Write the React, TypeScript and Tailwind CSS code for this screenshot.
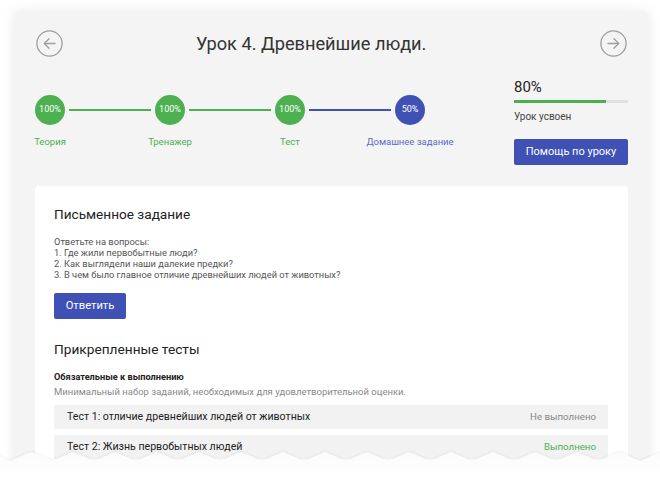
import React from 'react';

type Step = { label: string; value: string; done: boolean };

const steps: Step[] = [
  { label: 'Теория', value: '100%', done: true },
  { label: 'Тренажер', value: '100%', done: true },
  { label: 'Тест', value: '100%', done: true },
  { label: 'Домашнее задание', value: '50%', done: false },
];

const ArrowCircle: React.FC<{ dir: 'left' | 'right' }> = ({ dir }) => (
  <svg width="27" height="27" viewBox="0 0 27 27" fill="none" stroke="#9e9e9e" strokeWidth="1.3" strokeLinecap="round" strokeLinejoin="round">
    <circle cx="13.5" cy="13.5" r="12.6" />
    {dir === 'left' ? (
      <>
        <path d="M19 13.5H8.5" />
        <path d="M13 8.8L8.3 13.5L13 18.2" />
      </>
    ) : (
      <>
        <path d="M8 13.5H18.5" />
        <path d="M14 8.8L18.7 13.5L14 18.2" />
      </>
    )}
  </svg>
);

const App: React.FC = () => {
  // zigzag torn edge along the bottom
  const pts: string[] = ['0,30'];
  for (let x = -11; x <= 680; x += 21) {
    const i = Math.round((x + 11) / 21);
    pts.push(`${x},${i % 2 === 0 ? 4 : 13}`);
  }
  pts.push('680,30');

  return (
    <div className="relative w-[660px] h-[478px] overflow-hidden bg-white font-['Roboto',sans-serif]">
      <div className="pt-[11px] px-[15px]">
        <div className="w-[633px] h-[520px] bg-[#f4f4f4] rounded-[5px] shadow-[0_1px_14px_rgba(0,0,0,0.10)]">
          {/* Header */}
          <div className="flex items-center px-[21px] pt-[19px]">
            <ArrowCircle dir="left" />
            <h1 className="ml-[133px] text-[18.2px] leading-[26px] text-[#333]">Урок 4. Древнейшие люди.</h1>
            <div className="flex-1" />
            <ArrowCircle dir="right" />
          </div>

          {/* Steps + progress */}
          <div className="flex justify-between mt-[21px] pl-[20px] pr-[20px]">
            <div className="flex items-start pt-[17px]">
              {steps.map((s, i) => (
                <React.Fragment key={s.label}>
                  {i > 0 && (
                    <div
                      className={`mt-[14px] mx-[4px] w-[82px] h-[2px] ${s.done ? 'bg-[#4caf50]' : 'bg-[#3f51b5]'}`}
                    />
                  )}
                  <div className="flex flex-col items-center w-[30px]">
                    <div
                      className={`w-[30px] h-[30px] rounded-full flex items-center justify-center text-white text-[9px] ${s.done ? 'bg-[#4caf50]' : 'bg-[#3f51b5]'}`}
                    >
                      {s.value}
                    </div>
                    <div
                      className={`mt-[11px] whitespace-nowrap text-[9.5px] leading-[12px] ${s.done ? 'text-[#4caf50]' : 'text-[#5c6bc0]'}`}
                    >
                      {s.label}
                    </div>
                  </div>
                </React.Fragment>
              ))}
            </div>

            <div className="w-[114px]">
              <div className="text-[15px] leading-[18px] text-[#222]">80%</div>
              <div className="mt-[4px] h-[3px] w-full bg-[#e0e0e0]">
                <div className="h-full bg-[#4caf50]" style={{ width: '81%' }} />
              </div>
              <div className="mt-[8px] text-[10px] leading-[12px] text-[#444]">Урок усвоен</div>
              <button className="mt-[16px] w-full h-[26px] rounded-[2px] bg-[#3f51b5] text-white text-[11px]">
                Помощь по уроку
              </button>
            </div>
          </div>

          {/* White content card */}
          <div className="mt-[21px] mx-[20px] bg-white rounded-[4px] pl-[19px] pr-[20px] pt-[19px] pb-[40px]">
            <h2 className="text-[13.6px] leading-[18px] text-[#222]">Письменное задание</h2>
            <div className="mt-[13px] text-[9.3px] leading-[11px] text-[#555]">
              <div>Ответьте на вопросы:</div>
              <div>1. Где жили первобытные люди?</div>
              <div>2. Как выглядели наши далекие предки?</div>
              <div>3. В чем было главное отличие древнейших людей от животных?</div>
            </div>
            <button className="mt-[13px] w-[72px] h-[26px] rounded-[2px] bg-[#3f51b5] text-white text-[11.2px]">
              Ответить
            </button>

            <h2 className="mt-[21px] text-[13.7px] leading-[18px] text-[#222]">Прикрепленные тесты</h2>
            <div className="mt-[13px] text-[9.2px] leading-[12px] font-bold text-[#222]">Обязательные к выполнению</div>
            <div className="mt-[3px] text-[9.5px] leading-[12px] text-[#888]">
              Минимальный набор заданий, необходимых для удовлетворительной оценки.
            </div>
            <div className="mt-[7px] flex flex-col gap-[6px]">
              <div className="h-[24px] bg-[#f2f2f2] flex items-center justify-between pl-[13px] pr-[12px]">
                <span className="text-[10.6px] text-[#222]">Тест 1: отличие древнейших людей от животных</span>
                <span className="text-[9.7px] text-[#888]">Не выполнено</span>
              </div>
              <div className="h-[24px] bg-[#f2f2f2] flex items-center justify-between pl-[13px] pr-[12px]">
                <span className="text-[10.6px] text-[#222]">Тест 2: Жизнь первобытных людей</span>
                <span className="text-[9.7px] text-[#4caf50]">Выполнено</span>
              </div>
            </div>
          </div>
        </div>
      </div>

      {/* torn paper edge */}
      <svg className="absolute left-0 bottom-0" width="660" height="30" viewBox="0 0 660 30">
        <defs>
          <linearGradient id="fade" x1="0" y1="0" x2="0" y2="1">
            <stop offset="0" stopColor="#fbfbfb" />
            <stop offset="1" stopColor="#ffffff" />
          </linearGradient>
          <filter id="soft" x="-5%" y="-50%" width="110%" height="200%">
            <feDropShadow dx="0" dy="-1" stdDeviation="1.2" floodColor="#000" floodOpacity="0.06" />
          </filter>
        </defs>
        <polygon points={pts.join(' ')} fill="url(#fade)" filter="url(#soft)" />
      </svg>
    </div>
  );
};

export default App;
